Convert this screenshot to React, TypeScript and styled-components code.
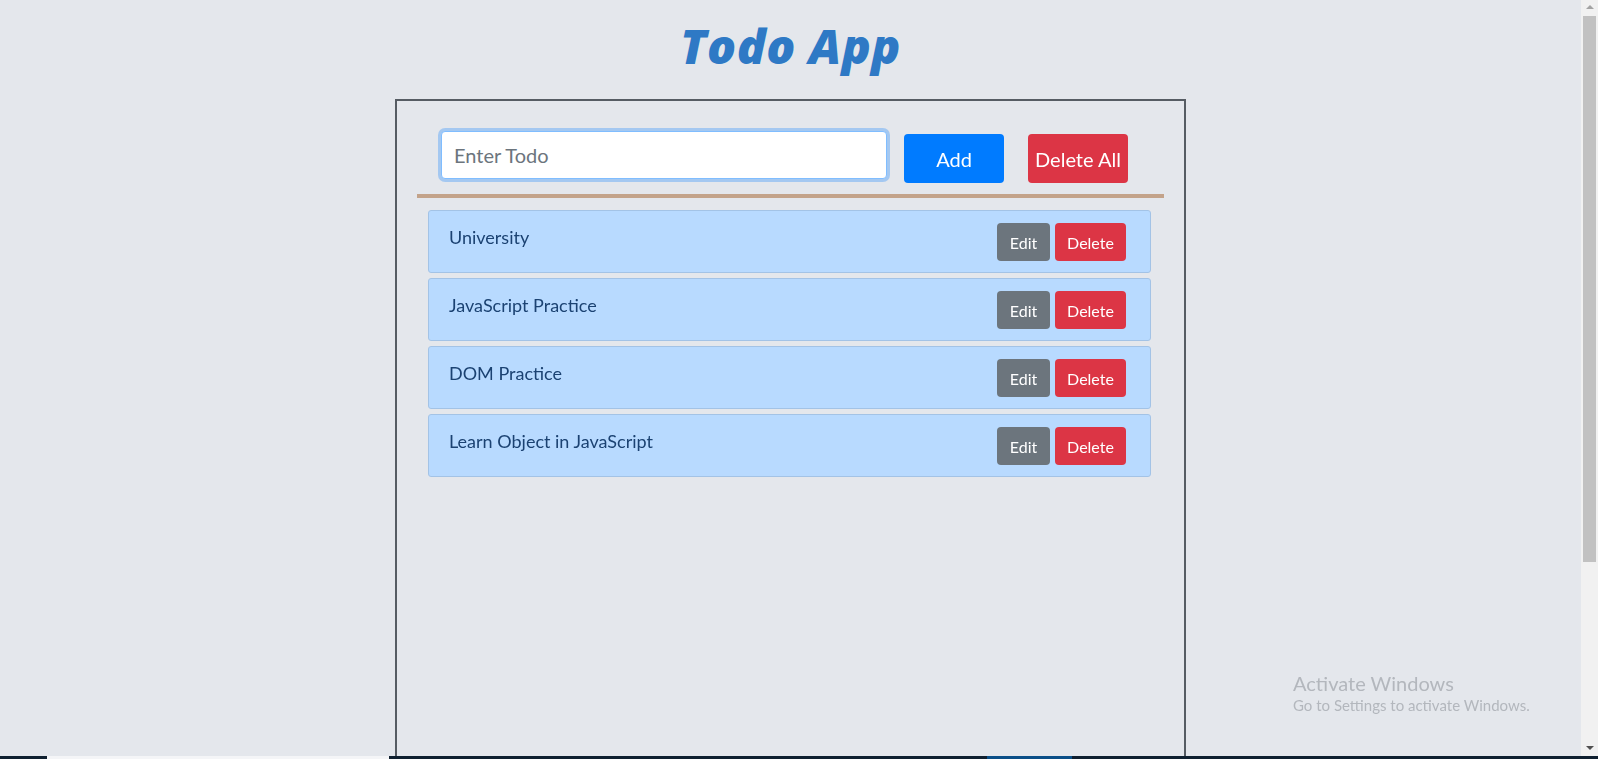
import React from "react";
import styled, { createGlobalStyle } from "styled-components";

const GlobalStyle = createGlobalStyle`
  html, body { margin: 0; padding: 0; height: 100%; overflow: hidden; }
  body { background: #e4e7ec; font-family: Lato, "Noto Sans", sans-serif; }
  * { box-sizing: border-box; }
`;

const Screen = styled.div`
  display: flex;
  flex-direction: column;
  height: 100vh;
  width: 100vw;
  overflow: hidden;
`;

const Viewport = styled.div`
  flex: 1;
  display: flex;
  min-height: 0;
`;

const Page = styled.main`
  flex: 1;
  min-width: 0;
  overflow: hidden;
  padding-top: 18px;
  background: #e4e7ec;
`;

const Title = styled.h1`
  margin: 0 0 25px;
  text-align: center;
  font-family: "Open Sans", Lato, sans-serif;
  font-style: italic;
  font-weight: 800;
  font-size: 48px;
  line-height: 56px;
  letter-spacing: 0.5px;
  color: #2e79c5;
`;

const Card = styled.section`
  width: 791px;
  min-height: 920px;
  margin: 0 auto;
  border: 2px solid #565c63;
  padding: 30px 20px 0;
`;

const Form = styled.div`
  display: flex;
  align-items: flex-start;
  padding-left: 24px;
`;

const Input = styled.input`
  width: 446px;
  height: 48px;
  border: 1px solid #80bdff;
  border-radius: 4px;
  box-shadow: 0 0 0 3px rgba(0, 123, 255, 0.28);
  background: #fff;
  padding: 0 12px;
  font-family: Lato, sans-serif;
  font-size: 20px;
  color: #495057;
  outline: none;
  &::placeholder { color: #6c757d; }
`;

const BigButton = styled.button<{ $variant: "primary" | "danger"; $gap: number }>`
  width: 100px;
  height: 49px;
  margin-top: 3px;
  margin-left: ${(p) => p.$gap}px;
  border: none;
  border-radius: 4px;
  background: ${(p) => (p.$variant === "primary" ? "#007bff" : "#dc3545")};
  color: #fff;
  font-family: Lato, sans-serif;
  font-size: 20px;
  padding: 0;
`;

const Divider = styled.hr`
  margin: 11px 0 0;
  border: none;
  height: 4px;
  background: #c3a38a;
`;

const List = styled.ul`
  list-style: none;
  margin: 12px 13px 0 11px;
  padding: 0;
  display: flex;
  flex-direction: column;
  gap: 5px;
`;

const Row = styled.li`
  display: flex;
  align-items: flex-start;
  background: #b8daff;
  border: 1px solid #a3c3e6;
  border-radius: 3px;
  padding: 12px 24px 11px 20px;
`;

const RowText = styled.span`
  flex: 1;
  font-size: 18px;
  line-height: 28px;
  color: #1b4272;
`;

const Actions = styled.div`
  display: flex;
  gap: 5px;
`;

const SmallButton = styled.button<{ $variant: "secondary" | "danger"; $width: number }>`
  width: ${(p) => p.$width}px;
  height: 38px;
  padding: 0;
  border: none;
  border-radius: 4px;
  background: ${(p) => (p.$variant === "secondary" ? "#6c757d" : "#dc3545")};
  color: #fff;
  font-family: Lato, sans-serif;
  font-size: 16px;
`;

const ScrollTrack = styled.div`
  width: 17px;
  background: #f1f1f1;
  display: flex;
  flex-direction: column;
  align-items: center;
`;

const Arrow = styled.div<{ $dir: "up" | "down" }>`
  width: 0;
  height: 0;
  border-left: 4px solid transparent;
  border-right: 4px solid transparent;
  ${(p) =>
    p.$dir === "up"
      ? "border-bottom: 4px solid #a3a3a3; margin: 5px 0 7px;"
      : "border-top: 4px solid #505050; margin: auto 0 6px;"}
`;

const Thumb = styled.div`
  width: 13px;
  height: 546px;
  background: #c1c1c1;
`;

const Taskbar = styled.div`
  height: 3px;
  background: #0f2030;
  display: flex;
`;

const TaskItem = styled.div<{ $color: string; $left: number; $width: number }>`
  margin-left: ${(p) => p.$left}px;
  width: ${(p) => p.$width}px;
  background: ${(p) => p.$color};
`;

const Watermark = styled.div`
  position: fixed;
  left: 1293px;
  top: 671px;
  color: #b3b7bd;
  font-family: Lato, sans-serif;
  pointer-events: none;
`;

const WatermarkTitle = styled.div`
  font-size: 20px;
  line-height: 24px;
`;

const WatermarkSub = styled.div`
  font-size: 15px;
  line-height: 20px;
`;

const todos = ["University", "JavaScript Practice", "DOM Practice", "Learn Object in JavaScript"];

export default function App() {
  return (
    <>
      <GlobalStyle />
      <Screen>
        <Viewport>
          <Page>
            <Title>Todo App</Title>
            <Card>
              <Form>
                <Input placeholder="Enter Todo" autoFocus />
                <BigButton $variant="primary" $gap={17}>Add</BigButton>
                <BigButton $variant="danger" $gap={24}>Delete All</BigButton>
              </Form>
              <Divider />
              <List>
                {todos.map((t) => (
                  <Row key={t}>
                    <RowText>{t}</RowText>
                    <Actions>
                      <SmallButton $variant="secondary" $width={53}>Edit</SmallButton>
                      <SmallButton $variant="danger" $width={71}>Delete</SmallButton>
                    </Actions>
                  </Row>
                ))}
              </List>
            </Card>
          </Page>
          <ScrollTrack>
            <Arrow $dir="up" />
            <Thumb />
            <Arrow $dir="down" />
          </ScrollTrack>
        </Viewport>
        <Taskbar>
          <TaskItem $color="#f4f5f7" $left={47} $width={342} />
          <TaskItem $color="#0a4f88" $left={598} $width={85} />
        </Taskbar>
        <Watermark>
          <WatermarkTitle>Activate Windows</WatermarkTitle>
          <WatermarkSub>Go to Settings to activate Windows.</WatermarkSub>
        </Watermark>
      </Screen>
    </>
  );
}
